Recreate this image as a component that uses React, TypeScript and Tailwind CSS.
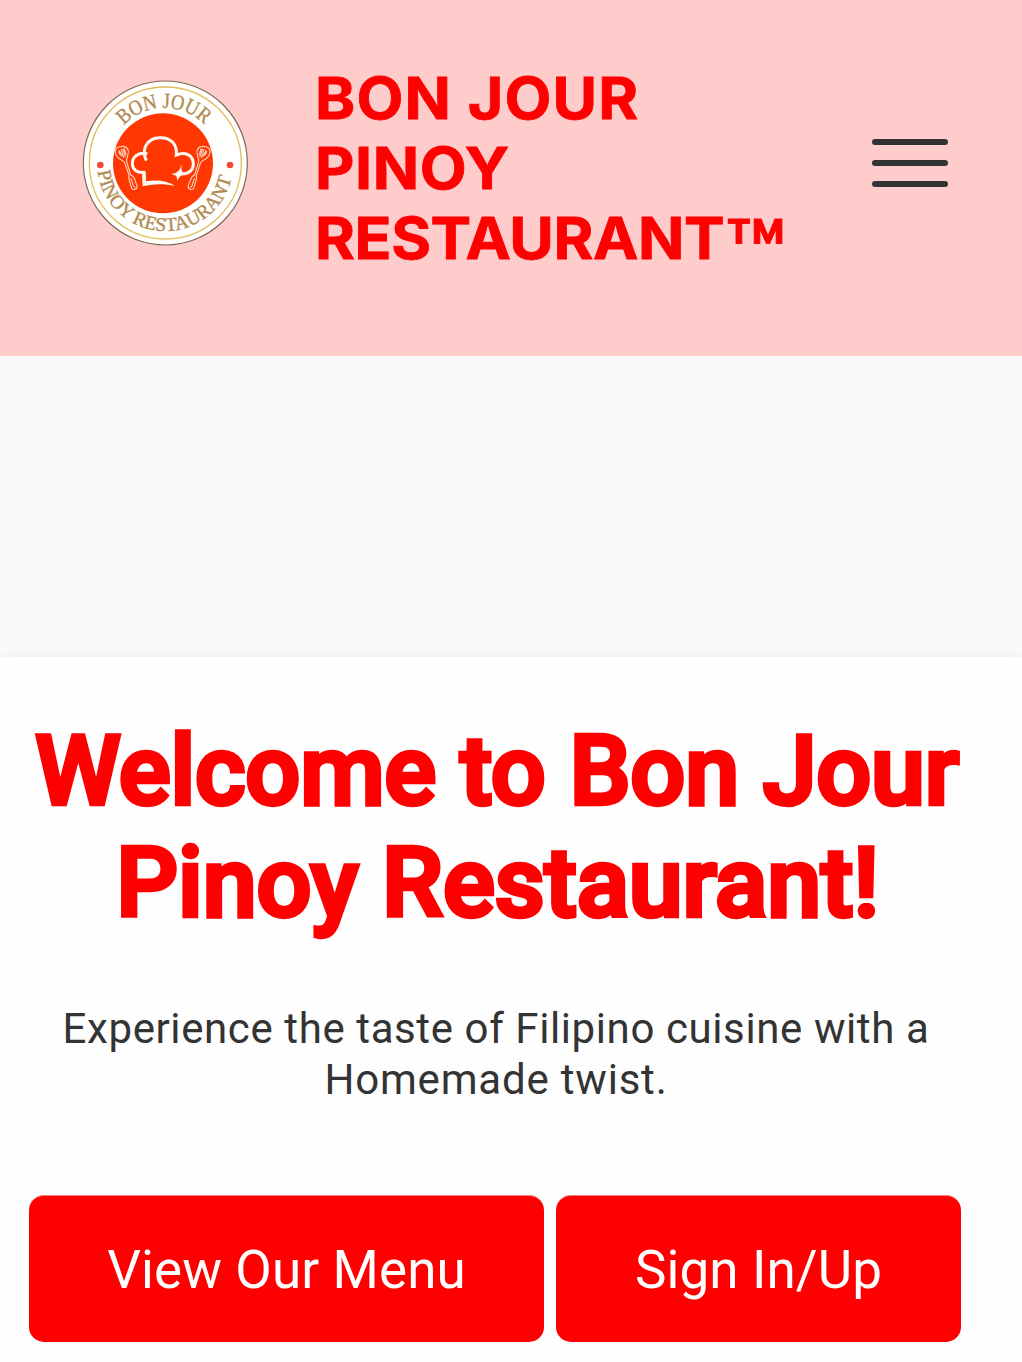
function Logo() {
  return (
    <svg viewBox="0 0 540 555" className="h-[185px] w-[180px] shrink-0" role="img" aria-label="Bon Jour Pinoy Restaurant">
      <circle cx="271" cy="279" r="246" fill="#fffffd" stroke="#7d6650" strokeWidth="3.5" />
      <circle cx="271" cy="279" r="228" fill="none" stroke="#e3bd62" strokeWidth="4" />
      <circle cx="264" cy="280" r="150" fill="#ff3700" />
      <circle cx="76" cy="285" r="10" fill="#f04a35" />
      <circle cx="465" cy="285" r="10" fill="#f04a35" />
      <defs>
        <path id="arc-top" d="M146 166A168 168 0 0 1 390 166" />
        <path id="arc-bottom" d="M68 304A204 204 0 0 0 470 322" />
      </defs>
      <g fill="#b08a50" fontFamily="Liberation Serif, serif" stroke="#b08a50" strokeWidth="1">
        <text fontSize="64">
          <textPath href="#arc-top" textLength="270" lengthAdjust="spacingAndGlyphs">BON JOUR</textPath>
        </text>
        <text fontSize="58">
          <textPath href="#arc-bottom" textLength="572" lengthAdjust="spacingAndGlyphs">PINOY RESTAURANT</textPath>
        </text>
      </g>
      {/* chef hat */}
      <g fill="none" stroke="#fffaf4" strokeWidth="9" strokeLinejoin="miter">
        <path d="M214 272C197 236 218 204 254 203C290 202 307 226 304 255C330 244 354 255 355 281C356 300 342 311 322 312" />
        <path d="M217 251C190 246 171 260 172 282C173 300 188 309 206 307L208 341" />
      </g>
      <path d="M202 304L212 304L213 334C244 328 278 332 300 348C270 341 238 341 203 349Z" fill="#fffaf4" />
      <path d="M319 282C320 298 318 304 327 309L344 312L322 315C315 318 311 325 306 333C307 325 306 321 303 317L289 312C308 310 317 300 319 282Z" fill="#fffaf4" />
      {/* slotted spoons */}
      <g id="spoon" fill="none" stroke="#ffd0b8" strokeWidth="3.5" strokeLinejoin="round" strokeLinecap="round">
        <path d="M122 251C117 235 131 228 144 229C157 230 163 240 159 253C157 263 154 268 155 275L167 315C175 318 178 323 180 331L187 350C186 359 175 361 170 355L163 332C161 325 161 321 162 316L149 278C145 270 125 268 122 251Z" />
        <path d="M131 245L136 255M139 238L146 262M148 237L153 253M133 242L141 258M144 237L151 260M168 326L174 344M174 346L180 352" />
      </g>
      <use href="#spoon" transform="translate(526 0) scale(-1 1)" />
    </svg>
  );
}

function MenuButton() {
  return (
    <button aria-label="Open menu" className="flex w-[76px] flex-col gap-[15px]">
      <span className="h-[6px] rounded-full bg-[#333]" />
      <span className="h-[6px] rounded-full bg-[#333]" />
      <span className="h-[6px] rounded-full bg-[#333]" />
    </button>
  );
}

export default function App() {
  return (
    <div className="flex h-[1362px] w-[1022px] flex-col overflow-hidden bg-[#f8fafc] font-['Roboto',sans-serif]">
      <header className="flex h-[356px] shrink-0 items-start bg-[#ffcccc] pr-[74px] pl-[75px]">
        <div className="pt-[70px]">
          <Logo />
        </div>
        <div className="ml-[60px] origin-left scale-x-105 pt-[63px] font-['Inter',sans-serif] text-[58px] leading-[70px] font-bold whitespace-nowrap text-[#ff0000] [-webkit-text-stroke:0.8px_#ff0000]">
          <div className="tracking-[1.1px]">BON JOUR</div>
          <div className="tracking-[0.6px]">PINOY</div>
          <div className="tracking-[-0.4px]">
            RESTAURANT<span className="align-[-28px] text-[94px] leading-[0] font-semibold tracking-normal">™</span>
          </div>
        </div>
        <div className="ml-auto pt-[138.5px]">
          <MenuButton />
        </div>
      </header>

      <main className="mt-[301px] flex-1 bg-[#fefefe] pr-[30px] text-center shadow-[0_0_12px_rgba(0,0,0,0.06)]">
        <h1 className="pt-[58px] text-[97px] leading-[112px] font-medium whitespace-nowrap text-[#ff0000] [-webkit-text-stroke:4.4px_#ff0000]">
          <span className="block pl-[2px] tracking-[-0.27px]">Welcome to Bon Jour</span>
          <span className="block pl-[3px] tracking-[-0.15px]">Pinoy Restaurant!</span>
        </h1>
        <p className="mt-[64px] text-[42px] leading-[51px] tracking-[0.6px] text-[#333]">
          Experience the taste of Filipino cuisine with a<br />
          <span className="tracking-[0.8px]">Homemade twist.</span>
        </p>
        <div className="mt-[90px] flex gap-[12px] pl-[29px] text-[53px] leading-[147px] tracking-[0.1px] text-white">
          <button className="h-[147px] w-[515px] rounded-[15px] border-t border-[#f58080] bg-[#ff0000] pt-px">View Our Menu</button>
          <button className="h-[147px] w-[405px] shrink-0 rounded-[15px] border-t border-[#f58080] bg-[#ff0000] pt-px">Sign In/Up</button>
        </div>
      </main>
    </div>
  );
}
